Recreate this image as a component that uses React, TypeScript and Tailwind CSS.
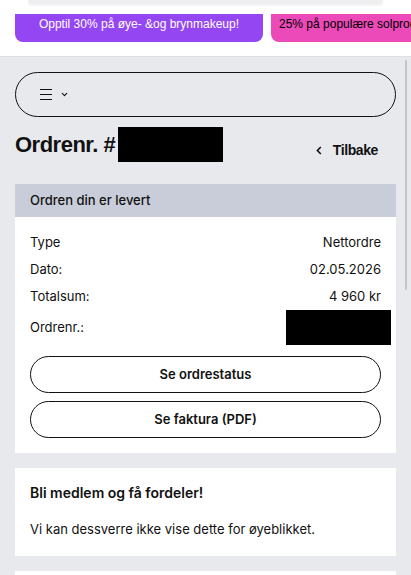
import { ChevronDown } from 'lucide-react'

function InfoRow({ label, value }: { label: string; value: string }) {
  return (
    <div className="flex h-[27px] items-center justify-between text-[13px]">
      <span>{label}</span>
      <span>{value}</span>
    </div>
  )
}

function PillButton({ children }: { children: string }) {
  return (
    <button
      type="button"
      className="flex h-[37px] w-full items-center justify-center rounded-full border border-[#111] bg-white text-[13px] font-semibold text-[#111]"
    >
      {children}
    </button>
  )
}

export default function App() {
  return (
    <div className="relative min-h-screen overflow-hidden bg-[#e8e9ed] font-['Inter',sans-serif] text-[#111]">
      <div className="h-[57px] border-b border-[#dfe0e4] bg-white">
        <div className="mx-[28px] h-[4px] rounded-b-xl bg-[#efeff2] shadow-[0_1px_3px_rgba(0,0,0,0.08)]" />
        <div className="mt-[10px] flex gap-[8px] overflow-hidden pl-[15px] font-['Liberation_Sans',Arial,sans-serif] text-[12px] leading-[16px]">
          <div className="flex h-[28px] w-[248px] shrink-0 justify-center rounded-b-lg bg-[#9446f2] pt-[2px] text-white">
            Opptil 30% på øye- &og brynmakeup!
          </div>
          <div className="h-[28px] w-[160px] shrink-0 overflow-hidden whitespace-nowrap rounded-bl-lg bg-[#eb4ab8] pl-[8px] pt-[2px] text-black">
            25% på populære solprodukter
          </div>
        </div>
      </div>

      <div className="px-[15px] pb-6 pt-[15px]">
        <div className="flex h-[45px] items-center gap-[8px] rounded-full border border-[#111] px-[24px]">
          <div className="flex w-[12px] flex-col gap-[3.5px]">
            <span className="h-[1.5px] bg-[#111]" />
            <span className="h-[1.5px] bg-[#111]" />
            <span className="h-[1.5px] bg-[#111]" />
          </div>
          <ChevronDown className="h-[9px] w-[9px]" strokeWidth={3} />
        </div>

        <div className="mt-[10px] flex h-[35px] items-center justify-between">
          <div className="flex items-center">
            <h1 className="font-['Liberation_Sans',Arial,sans-serif] text-[22px] font-bold leading-none tracking-[-0.5px]">
              Ordrenr. #
            </h1>
            <div className="ml-[3px] h-[35px] w-[105px] bg-black" />
          </div>
          <button
            type="button"
            className="flex items-center gap-[11px] self-end pb-[2px] pr-[18px] font-['Liberation_Sans',Arial,sans-serif] text-[14px] font-bold leading-[20px] tracking-[-0.4px]"
          >
            <svg width="6" height="9" viewBox="0 0 6 9" fill="none" stroke="#111" strokeWidth="1.6">
              <path d="M4.8 1 1.4 4.5l3.4 3.5" />
            </svg>
            Tilbake
          </button>
        </div>

        <section className="mt-[22px] bg-white">
          <div className="flex h-[33px] items-center bg-[#c9cdd9] px-[15px] text-[13px] font-medium">
            Ordren din er levert
          </div>
          <div className="px-[15px] pb-[15px] pt-[12px]">
            <InfoRow label="Type" value="Nettordre" />
            <InfoRow label="Dato:" value="02.05.2026" />
            <InfoRow label="Totalsum:" value="4 960 kr" />
            <div className="flex h-[35px] items-center justify-between text-[13px]">
              <span>Ordrenr.:</span>
              <div className="mr-[-10px] h-[35px] w-[105px] bg-black" />
            </div>
            <div className="mt-[11px] flex flex-col gap-[8px]">
              <PillButton>Se ordrestatus</PillButton>
              <PillButton>Se faktura (PDF)</PillButton>
            </div>
          </div>
        </section>

        <section className="mt-[15px] bg-white px-[15px] pb-[17px] pt-[15px]">
          <h2 className="text-[14px] font-semibold leading-[20px]">Bli medlem og få fordeler!</h2>
          <p className="mt-[16px] text-[13px] leading-[20px]">Vi kan dessverre ikke vise dette for øyeblikket.</p>
        </section>

        <section className="mt-[15px] h-[80px] bg-white" />
      </div>

      <div className="absolute right-[4px] top-[60px] h-[230px] w-[2px] rounded-full bg-[#c4c4c6]" />
    </div>
  )
}
